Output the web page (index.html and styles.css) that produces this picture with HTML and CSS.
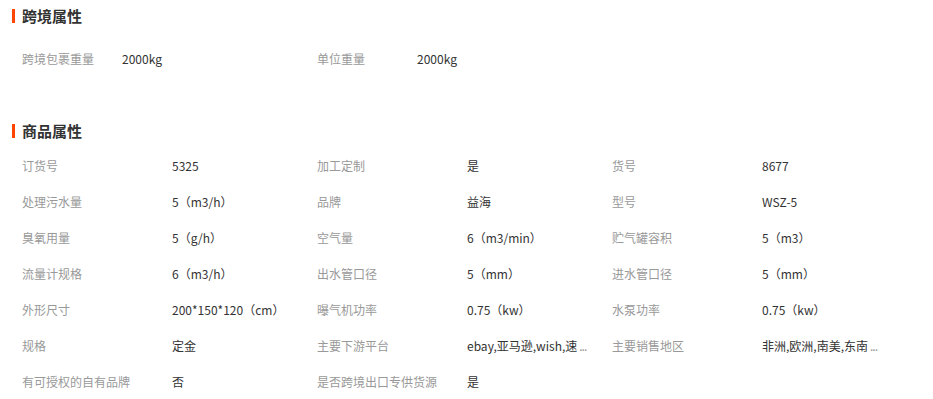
FILE: index.html
```html
<!DOCTYPE html>
<html lang="zh">
<head>
<meta charset="utf-8">
<link rel="stylesheet" href="styles.css">
</head>
<body>
<div class="page">
  <section class="block block-cross">
    <h2 class="title">跨境属性</h2>
    <div class="grid">
      <div class="item narrow"><span class="label">跨境包裹重量</span><span class="value">2000kg</span></div>
      <div class="item narrow"><span class="label">单位重量</span><span class="value">2000kg</span></div>
    </div>
  </section>
  <section class="block block-goods">
    <h2 class="title">商品属性</h2>
    <div class="grid">
      <div class="item"><span class="label">订货号</span><span class="value">5325</span></div>
      <div class="item"><span class="label">加工定制</span><span class="value">是</span></div>
      <div class="item"><span class="label">货号</span><span class="value">8677</span></div>
      <div class="item"><span class="label">处理污水量</span><span class="value">5（m3/h）</span></div>
      <div class="item"><span class="label">品牌</span><span class="value">益海</span></div>
      <div class="item"><span class="label">型号</span><span class="value">WSZ-5</span></div>
      <div class="item"><span class="label">臭氧用量</span><span class="value">5（g/h）</span></div>
      <div class="item"><span class="label">空气量</span><span class="value">6（m3/min）</span></div>
      <div class="item"><span class="label">贮气罐容积</span><span class="value">5（m3）</span></div>
      <div class="item"><span class="label">流量计规格</span><span class="value">6（m3/h）</span></div>
      <div class="item"><span class="label">出水管口径</span><span class="value">5（mm）</span></div>
      <div class="item"><span class="label">进水管口径</span><span class="value">5（mm）</span></div>
      <div class="item"><span class="label">外形尺寸</span><span class="value">200*150*120（cm）</span></div>
      <div class="item"><span class="label">曝气机功率</span><span class="value">0.75（kw）</span></div>
      <div class="item"><span class="label">水泵功率</span><span class="value">0.75（kw）</span></div>
      <div class="item"><span class="label">规格</span><span class="value">定金</span></div>
      <div class="item"><span class="label">主要下游平台</span><span class="value">ebay,亚马逊,wish,速<span class="dots">...</span></span></div>
      <div class="item"><span class="label">主要销售地区</span><span class="value">非洲,欧洲,南美,东南<span class="dots">...</span></span></div>
      <div class="item"><span class="label">有可授权的自有品牌</span><span class="value">否</span></div>
      <div class="item"><span class="label">是否跨境出口专供货源</span><span class="value">是</span></div>
    </div>
  </section>
</div>
</body>
</html>
```

FILE: styles.css
```css
html, body {
  margin: 0;
  padding: 0;
  background: #fff;
}

body {
  font-family: "Noto Sans CJK SC", "Liberation Sans", sans-serif;
  font-size: 12px;
  color: #333;
}

.page {
  width: 933px;
  padding-left: 12px;
  box-sizing: border-box;
}

.block-cross {
  padding-top: 6px;
}

.block-goods {
  padding-top: 44px;
}

.title {
  margin: 0;
  height: 20px;
  line-height: 20px;
  font-size: 15px;
  font-weight: bold;
  color: #333;
  display: flex;
  align-items: center;
}

.title::before {
  content: "";
  width: 3px;
  height: 14px;
  background: #ff4400;
  margin-right: 7px;
  flex: none;
}

.block-cross .grid {
  margin-top: 15px;
  grid-template-columns: repeat(2, 295px);
}

.block-goods .grid {
  margin-top: 7px;
}

.grid {
  display: grid;
  grid-template-columns: repeat(3, 295px);
  padding-left: 10px;
}

.item {
  display: flex;
  height: 36px;
  line-height: 36px;
  white-space: nowrap;
}

.label {
  width: 150px;
  flex: none;
  color: #999;
}

.narrow .label {
  width: 100px;
}

.value {
  color: #333;
}

.dots {
  color: #999;
  letter-spacing: -1px;
  margin-left: 2px;
}
```
